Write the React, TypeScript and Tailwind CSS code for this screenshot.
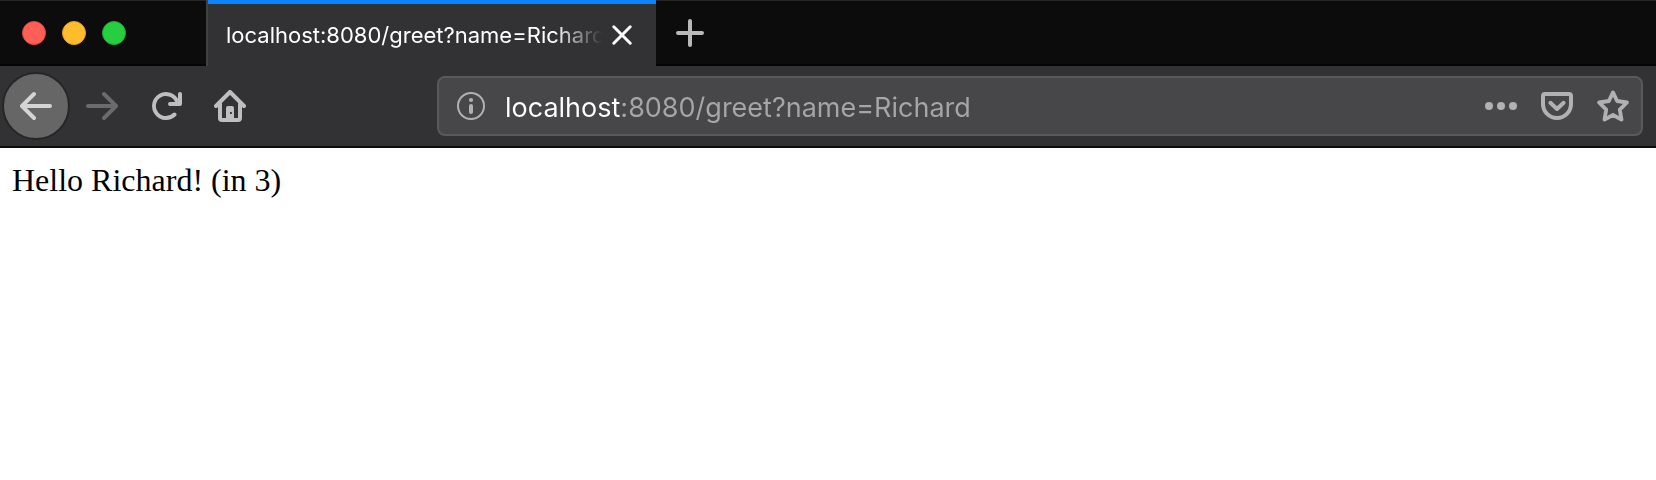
import { useState, type ReactNode } from "react";

function Icon({ children }: { children: ReactNode }) {
  return (
    <svg viewBox="0 0 16 16" className="size-8 shrink-0" fill="currentColor" aria-hidden="true">
      {children}
    </svg>
  );
}

const arrow =
  "M15 7H3.414l4.293-4.293a1 1 0 0 0-1.414-1.414l-6 6a1 1 0 0 0 0 1.414l6 6a1 1 0 0 0 1.414-1.414L3.414 9H15a1 1 0 0 0 0-2z";

function TabBar() {
  return (
    <header className="flex h-[66px] bg-[#0c0c0d]">
      <div className="flex w-[206px] shrink-0 items-center gap-4 border-t border-b-2 border-t-[#252526] border-b-[#050505] pl-[22px]">
        <button aria-label="Close window" className="size-6 rounded-full border border-[#e2463f] bg-[#ff5f57]" />
        <button aria-label="Minimize window" className="size-6 rounded-full border border-[#e0a028] bg-[#ffbd2e]" />
        <button aria-label="Zoom window" className="size-6 rounded-full border border-[#1bac2c] bg-[#28ce41]" />
      </div>
      <div className="w-0.5 shrink-0 bg-[#414143]" />
      <div className="flex w-[448px] shrink-0 items-center border-t-4 border-[#0a84ff] bg-[#323234] pr-6 pl-[18px]">
        <span className="min-w-0 flex-1 overflow-hidden text-[22px] leading-8 whitespace-nowrap text-white [mask-image:linear-gradient(to_left,transparent,black_48px)]">
          localhost:8080/greet?name=Richard
        </span>
        <button aria-label="Close tab" className="ml-2.5 text-[#f9f9fa]">
          <svg viewBox="0 0 20 20" className="size-5" fill="none" stroke="currentColor" strokeWidth="3" strokeLinecap="round" aria-hidden="true">
            <path d="M1.8 1.8l16.4 16.4M18.2 1.8L1.8 18.2" />
          </svg>
        </button>
      </div>
      <div className="flex flex-1 items-center border-t border-b-2 border-t-[#252526] border-b-[#050505] pl-5">
        <button aria-label="New tab" className="text-[#b9b9ba]">
          <svg viewBox="0 0 28 28" className="size-7" fill="none" stroke="currentColor" strokeWidth="4" strokeLinecap="round" aria-hidden="true">
            <path d="M14 2v24M2 14h24" />
          </svg>
        </button>
      </div>
    </header>
  );
}

function AddressBar() {
  const [url, setUrl] = useState("localhost:8080/greet?name=Richard");
  return (
    <div className="flex h-[60px] min-w-0 flex-1 items-center rounded-lg border-2 border-[#59595b] bg-[#474749] pr-3 pl-4 text-[#b1b1b3]">
      <button aria-label="Site information">
        <Icon>
          <circle cx="8" cy="8" r="6.5" fill="none" stroke="currentColor" />
          <circle cx="8" cy="5" r="1.05" />
          <rect x="7" y="7" width="2" height="5" rx="1" />
        </Icon>
      </button>
      <input
        aria-label="Address"
        value={url}
        onChange={(e) => setUrl(e.target.value)}
        className="ml-[18px] h-11 min-w-0 flex-1 bg-[linear-gradient(to_right,#ffffff_116px,#a6a6a8_116px)] bg-clip-text pt-[3px] text-[27px] text-transparent caret-white outline-none"
      />
      <div className="flex gap-6">
        <button aria-label="Page actions">
          <Icon>
            <circle cx="2" cy="8" r="2" />
            <circle cx="8" cy="8" r="2" />
            <circle cx="14" cy="8" r="2" />
          </Icon>
        </button>
        <button aria-label="Save to Pocket">
          <Icon>
            <g fill="none" stroke="currentColor" strokeWidth="2" strokeLinecap="round" strokeLinejoin="round">
              <path d="M2 2h12a1 1 0 0 1 1 1v4a7 7 0 0 1-14 0V3a1 1 0 0 1 1-1z" />
              <path d="M4.7 6.4L8 9.5l3.3-3.1" />
            </g>
          </Icon>
        </button>
        <button aria-label="Bookmark this page">
          <Icon>
            <path
              fill="none"
              stroke="currentColor"
              strokeWidth="1.9"
              strokeLinejoin="round"
              d="M8 1.2l2.05 4.3 4.9.75-3.55 3.55.85 5L8 12.5l-4.25 2.3.85-5L1.05 6.25l4.9-.75z"
            />
          </Icon>
        </button>
      </div>
    </div>
  );
}

function Toolbar() {
  return (
    <nav className="flex h-[82px] items-center border-b-2 border-[#0c0c0d] bg-[#323234] pr-[13px] pl-0.5 text-[#bebebf]">
      <button
        aria-label="Back"
        className="flex size-[68px] shrink-0 items-center justify-center rounded-full border-2 border-[#262627] bg-[#666667] text-[#d4d4d4]"
      >
        <Icon>
          <path d={arrow} />
        </Icon>
      </button>
      <button aria-label="Forward" className="ml-4 text-[#6b6b6d]">
        <Icon>
          <path d={arrow} transform="matrix(-1 0 0 1 16 0)" />
        </Icon>
      </button>
      <button aria-label="Reload" className="ml-8">
        <Icon>
          <path d="M15 1a1 1 0 0 0-1 1v2.418A6.995 6.995 0 1 0 8 15a6.954 6.954 0 0 0 4.95-2.05 1 1 0 0 0-1.414-1.414A5.019 5.019 0 1 1 12.549 6H10a1 1 0 0 0 0 2h5a1 1 0 0 0 1-1V2a1 1 0 0 0-1-1z" />
        </Icon>
      </button>
      <button aria-label="Home" className="ml-8">
        <Icon>
          <g fill="none" stroke="currentColor" strokeWidth="2" strokeLinecap="round" strokeLinejoin="round">
            <path d="M1 8l7-7 7 7" />
            <path d="M3 7v7a1 1 0 0 0 1 1h8a1 1 0 0 0 1-1V7" />
          </g>
          <path fillRule="evenodd" d="M6 15V9a1 1 0 0 1 1-1h2a1 1 0 0 1 1 1v6zM8 11v1h.9v-1z" />
        </Icon>
      </button>
      <div className="ml-[191px] flex min-w-0 flex-1">
        <AddressBar />
      </div>
    </nav>
  );
}

export default function App() {
  return (
    <div className="min-h-screen bg-white font-['Inter',sans-serif]">
      <TabBar />
      <Toolbar />
      <main className="px-3 py-3.5 font-['Liberation_Serif',serif] text-[32px] leading-9 text-black">
        <p>Hello Richard! (in 3)</p>
      </main>
    </div>
  );
}
